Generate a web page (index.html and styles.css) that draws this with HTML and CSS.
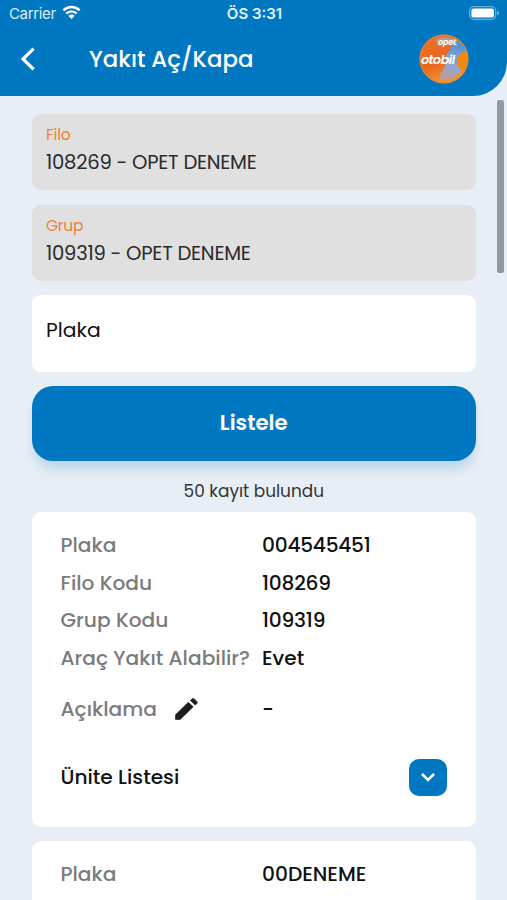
FILE: index.html
```html
<!DOCTYPE html>
<html lang="tr">
<head>
    <meta charset="UTF-8">
    <meta name="viewport" content="width=device-width, initial-scale=1.0">
    <title>Yakıt Aç/Kapa</title>
    <link rel="stylesheet" href="styles.css">
</head>
<body>
    <!-- Header -->
    <header class="header">
        <div class="status-bar">
            <div class="carrier">
                <span>Carrier</span>
                <svg class="wifi" viewBox="0 0 18 14" width="19" height="14.500">
                    <path d="M1.2 5.2a11 11 0 0 1 15.6 0M4 8.2a7 7 0 0 1 10 0" fill="none" stroke="#fff" stroke-width="2.3"/>
                    <path d="M9 13.600L5.900 10.400a4.400 4.400 0 0 1 6.200 0z" fill="#fff"/>
                </svg>
            </div>
            <span class="clock">ÖS 3:31</span>
            <svg class="battery" viewBox="0 0 31 14" width="31" height="14">
                <rect x="0.7" y="0.7" width="26" height="12.6" rx="4" fill="none" stroke="#69afdb" stroke-width="1.2"/>
                <rect x="2.4" y="2.4" width="22.6" height="9.2" rx="2.2" fill="#fff"/>
                <path d="M28.2 4.8q2 .7 2 2.2t-2 2.2z" fill="#69afdb"/>
            </svg>
        </div>
        <div class="nav-bar">
            <a href="#" class="back">
                <svg viewBox="0 0 16 24" width="16" height="24">
                    <path d="M13.6 1.6L3 12l10.6 10.4" fill="none" stroke="#fff" stroke-width="3.2"/>
                </svg>
            </a>
            <h1>Yakıt Aç/Kapa</h1>
            <svg class="logo" viewBox="0 0 50 50" width="50" height="50">
                <defs>
                    <linearGradient id="ball" x1="0" y1="0" x2="0.4" y2="1">
                        <stop offset="0" stop-color="#e8792a"/>
                        <stop offset="0.6" stop-color="#e8651f"/>
                        <stop offset="1" stop-color="#ee9430"/>
                    </linearGradient>
                    <linearGradient id="swirl" x1="0.6" y1="0" x2="0.3" y2="1">
                        <stop offset="0" stop-color="#4f90cc"/>
                        <stop offset="0.6" stop-color="#8aa9dc"/>
                        <stop offset="1" stop-color="#c29a96"/>
                    </linearGradient>
                    <clipPath id="round"><circle cx="25" cy="25" r="24"/></clipPath>
                </defs>
                <circle cx="25" cy="25" r="24.5" fill="#dd7a30"/>
                <g clip-path="url(#round)">
                    <circle cx="25" cy="25" r="24" fill="url(#ball)"/>
                    <path d="M36 6q8 2 12 12-8 2-10 8-1 6 5 10-6 10-22 10-1-5 3-9l3-8q-2-6 3-12z" fill="url(#swirl)"/>
                    <path d="M50 16q-12 2-12 11 0 7 6 10l6-4z" fill="#f08a12"/>
                    <path d="M17 5q10-4 20 1l2 6q-9-3-20 0z" fill="#9db4cf" opacity="0.6"/>
                </g>
                <circle cx="25" cy="25" r="24" fill="none" stroke="#e58a3a" stroke-width="0.8"/>
                <text x="19" y="11" class="logo-small" textLength="18">opet</text>
                <text x="2" y="30" class="logo-text" textLength="34">otobil</text>
            </svg>
        </div>
    </header>

    <!-- Search Form -->
    <main class="content">
        <div class="field disabled">
            <label>Filo</label>
            <span>108269 - OPET DENEME</span>
        </div>
        <div class="field disabled">
            <label>Grup</label>
            <span>109319 - OPET DENEME</span>
        </div>
        <div class="field plate">
            <span>Plaka</span>
        </div>
        <button class="list-button">Listele</button>
        <p class="result-count">50 kayıt bulundu</p>

        <!-- Results -->
        <div class="card">
            <div class="row"><span class="name">Plaka</span><span class="value">004545451</span></div>
            <div class="row"><span class="name">Filo Kodu</span><span class="value">108269</span></div>
            <div class="row"><span class="name">Grup Kodu</span><span class="value">109319</span></div>
            <div class="row"><span class="name">Araç Yakıt Alabilir?</span><span>Evet</span></div>
            <div class="row description">
                <span class="name">Açıklama
                    <svg class="pencil" viewBox="0 0 23 22" width="23" height="22">
                        <path d="M0.5 21.5v-4.800L13.400 4.200l4.800 4.600L5.200 21.500zM15.400 2.600l1.900-1.800q.9-.7 1.800 0l3 2.900q.7.800 0 1.600l-2 1.800z" fill="#1c1c1c" stroke="#1c1c1c" stroke-width="0.600"/>
                    </svg>
                </span>
                <span>-</span>
            </div>
            <div class="row units">
                <span>Ünite Listesi</span>
                <button class="expand">
                    <svg viewBox="0 0 16 10" width="16" height="10">
                        <path d="M2 2l6 6 6-6" fill="none" stroke="#fff" stroke-width="2.5"/>
                    </svg>
                </button>
            </div>
        </div>
        <div class="card last">
            <div class="row"><span class="name">Plaka</span><span>00DENEME</span></div>
        </div>
    </main>
    <div class="scrollbar"></div>
</body>
</html>
```
FILE: styles.css
```css
* {
    box-sizing: border-box;
}
body {
    font-family: Poppins, Inter, sans-serif;
    margin: 0;
    height: 900px;
    overflow: hidden;
    position: relative;
    background-color: #e8eef5;
    color: #111;
}
.header {
    height: 96px;
    background-color: #0078c1;
    border-bottom-right-radius: 34px;
    color: #fff;
}
.status-bar {
    height: 27px;
    padding: 0 7px 0 9px;
    display: grid;
    grid-template-columns: 1fr auto 1fr;
    align-items: center;
    font-family: Inter, sans-serif;
    font-size: 15px;
}
.carrier {
    display: flex;
    align-items: center;
    gap: 6px;
    letter-spacing: -0.35px;
    color: #d9ecf8;
}
.clock {
    font-weight: 600;
    color: #e4f2fb;
}
.wifi {
    margin-top: -2px;
}
.battery {
    justify-self: end;
    margin-top: -1px;
}
.nav-bar {
    height: 64px;
    padding: 0 38px 0 20px;
    display: flex;
    align-items: center;
}
.back {
    display: flex;
    width: 69px;
}
h1 {
    margin: 0;
    flex: 1;
    font-size: 22.8px;
    font-weight: 500;
}
.logo-small, .logo-text {
    fill: #fff;
    font-style: italic;
    font-weight: 600;
}
.logo-small {
    font-size: 8px;
}
.logo-text {
    font-size: 13px;
}
.content {
    padding: 18px 31.5px 0 32px;
}
.field {
    height: 76px;
    margin-bottom: 15px;
    padding: 9px 14px;
    border-radius: 9px;
    background-color: #fff;
    font-size: 19.6px;
    display: flex;
    flex-direction: column;
}
.field.disabled {
    background-color: #e0e0e0;
    color: #2b2b2b;
    letter-spacing: -0.25px;
}
.field label {
    color: #f08239;
    font-size: 15.5px;
    line-height: 23px;
}
.field span {
    line-height: 33px;
}
.field.plate {
    justify-content: center;
    height: 77px;
    margin: -1px 0 14px;
    padding-bottom: 15px;
    font-size: 20.3px;
}
.list-button {
    display: block;
    width: 100%;
    height: 75px;
    padding: 0 0 3px;
    border: none;
    border-radius: 21px;
    background-color: #0078c1;
    color: #fff;
    font-family: inherit;
    font-size: 21.3px;
    font-weight: 600;
    box-shadow: 0 10px 12px -2px rgba(0, 120, 193, 0.2);
}
.result-count {
    margin: 19px 0 10px;
    text-align: center;
    font-size: 16.9px;
    line-height: 22px;
    color: #333;
}
.card {
    height: 315px;
    margin-bottom: 14px;
    padding: 14px 28.5px 12px;
    border-radius: 9px;
    background-color: #fff;
    font-size: 20.2px;
    font-weight: 500;
}
.card.last {
    height: 59px;
    margin-bottom: 0;
    padding-bottom: 0;
    border-radius: 9px 9px 0 0;
}
.row {
    height: 37.7px;
    display: flex;
    align-items: center;
}
.name {
    width: 201.5px;
    display: flex;
    align-items: center;
    gap: 18px;
    white-space: nowrap;
    color: #7b7b7b;
}
.value {
    letter-spacing: -0.25px;
}
.row.description {
    height: 65px;
}
.row.units {
    height: 71px;
    justify-content: space-between;
}
.expand {
    width: 38px;
    height: 37px;
    padding: 0;
    border: none;
    border-radius: 10px;
    background-color: #0078c1;
    display: flex;
    align-items: center;
    justify-content: center;
}
.scrollbar {
    position: absolute;
    top: 100px;
    right: 3px;
    width: 7px;
    height: 173px;
    border-radius: 2px;
    background-color: #939a9f;
}
```
